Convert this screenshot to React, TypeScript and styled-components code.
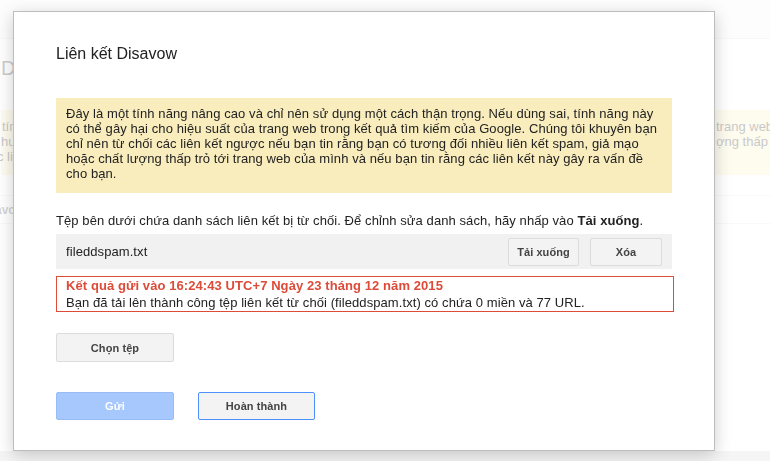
import React from "react";
import styled, { createGlobalStyle } from "styled-components";

const Global = createGlobalStyle`
  html, body { margin: 0; padding: 0; }
  body {
    font-family: "Liberation Sans", Arial, sans-serif;
    background: #ffffff;
    overflow: hidden;
  }
  * { box-sizing: border-box; }
`;

/* ---------- background page (behind the modal) ---------- */
const BgPage = styled.div`
  width: 770px;
  height: 461px;
  display: flex;
  flex-direction: column;
  overflow: hidden;
  background: #ffffff;
`;

const BgTopBar = styled.div`
  height: 39px;
  flex: none;
  background: #f6f6f6;
  border-bottom: 1px solid #e0e0e0;
`;

const BgContent = styled.div`
  flex: 1;
  display: flex;
  flex-direction: column;
  padding-left: 1px;
`;

const BgHeading = styled.div`
  margin-top: 17px;
  font-size: 20px;
  line-height: 24px;
  color: #333;
  white-space: nowrap;
`;

const BgNotice = styled.div`
  margin-top: 30px;
  height: 65px;
  padding-top: 9px;
  background: #f9edbe;
  color: #222;
  font-size: 13px;
  line-height: 15px;
`;

const BgNoticeLine = styled.div`
  display: grid;
  grid-template-columns: 715px 1fr;
  white-space: nowrap;
  height: 15px;
`;

const BgLeftText = styled.span<{ $shift: number }>`
  margin-left: ${(p) => p.$shift}px;
`;

const BgTable = styled.div`
  margin-top: 20px;
  border-top: 1px solid #e5e5e5;
  border-bottom: 1px solid #e5e5e5;
  height: 29px;
  display: flex;
  align-items: center;
  font-size: 12px;
  font-weight: bold;
  color: #555;
  white-space: nowrap;
`;

const BgTableText = styled.span`
  margin-left: -6px;
`;

const BgFooter = styled.div`
  margin-top: auto;
  height: 10px;
  flex: none;
  background: #d6d6d6;
`;

const Overlay = styled.div`
  position: fixed;
  inset: 0;
  background: rgba(255, 255, 255, 0.75);
`;

/* ---------- modal dialog ---------- */
const Dialog = styled.div`
  position: fixed;
  left: 13px;
  top: 11px;
  width: 702px;
  background: #ffffff;
  border: 1px solid #bdbdbd;
  box-shadow: 0 4px 16px rgba(0, 0, 0, 0.2);
  padding: 32px 42px 30px 42px;
  display: flex;
  flex-direction: column;
  color: #222;
  font-size: 13px;
  letter-spacing: 0.08px;
`;

const Title = styled.div`
  font-size: 16px;
  line-height: 20px;
  color: #222;
  letter-spacing: 0;
`;

const Warning = styled.div`
  margin-top: 34px;
  background: #f9edbe;
  padding: 8px 10px 12px 10px;
  font-size: 13px;
  line-height: 15px;
  color: #222;
  white-space: nowrap;
`;

const Description = styled.div`
  margin-top: 20px;
  font-size: 13px;
  line-height: 16px;
  white-space: nowrap;
`;

const Strong = styled.b`
  font-weight: bold;
`;

const FileRow = styled.div`
  margin-top: 5px;
  height: 35px;
  background: #f1f1f1;
  display: flex;
  align-items: center;
  padding: 0 10px;
  gap: 11px;
`;

const FileName = styled.div`
  flex: 1;
  font-size: 13px;
  color: #222;
`;

const Button = styled.button<{ $w: number; $h?: number; $variant?: "default" | "primary" | "focus" }>`
  width: ${(p) => p.$w}px;
  height: ${(p) => p.$h ?? 28}px;
  padding: 0 8px;
  border-radius: 2px;
  font-family: "Liberation Sans", Arial, sans-serif;
  font-size: 11px;
  font-weight: bold;
  letter-spacing: 0.08px;
  cursor: default;
  outline: none;
  ${(p) =>
    p.$variant === "primary"
      ? `
    background: #a6c8fc;
    border: 1px solid #98bdf6;
    color: #ffffff;
  `
      : p.$variant === "focus"
      ? `
    background: #f3f3f3;
    border: 1px solid #4d90fe;
    color: #444;
  `
      : `
    background: #f3f3f3;
    border: 1px solid #dcdcdc;
    color: #444;
  `}
`;

const Result = styled.div`
  margin-top: 7px;
  width: calc(100% + 2px);
  border: 1px solid #dd4b39;
  padding: 0 9px;
  font-size: 13px;
  line-height: 17px;
  white-space: nowrap;
`;

const ResultTitle = styled.div`
  color: #dd4b39;
  font-weight: bold;
`;

const ResultText = styled.div`
  color: #222;
`;

const ChooseRow = styled.div`
  margin-top: 21px;
  display: flex;
`;

const Actions = styled.div`
  margin-top: 30px;
  display: flex;
  gap: 24px;
`;

const warningLines = [
  "Đây là một tính năng nâng cao và chỉ nên sử dụng một cách thận trọng. Nếu dùng sai, tính năng này",
  "có thể gây hại cho hiệu suất của trang web trong kết quả tìm kiếm của Google. Chúng tôi khuyên bạn",
  "chỉ nên từ chối các liên kết ngược nếu bạn tin rằng bạn có tương đối nhiều liên kết spam, giả mạo",
  "hoặc chất lượng thấp trỏ tới trang web của mình và nếu bạn tin rằng các liên kết này gây ra vấn đề",
  "cho bạn.",
];

export default function App() {
  return (
    <>
      <Global />
      <BgPage>
        <BgTopBar />
        <BgContent>
          <BgHeading>Disavow</BgHeading>
          <BgNotice>
            <BgNoticeLine>
              <BgLeftText $shift={1}>tính năng nâng cao</BgLeftText>
              <span>trang web của Google</span>
            </BgNoticeLine>
            <BgNoticeLine>
              <BgLeftText $shift={0}>huống nhiều</BgLeftText>
              <span>ợng thấp trỏ tới</span>
            </BgNoticeLine>
            <BgNoticeLine>
              <BgLeftText $shift={-4}>c liên kết</BgLeftText>
              <span></span>
            </BgNoticeLine>
          </BgNotice>
          <BgTable>
            <BgTableText>avow</BgTableText>
          </BgTable>
        </BgContent>
        <BgFooter />
      </BgPage>
      <Overlay />
      <Dialog role="dialog">
        <Title>Liên kết Disavow</Title>
        <Warning>
          {warningLines.map((line, i) => (
            <div key={i}>{line}</div>
          ))}
        </Warning>
        <Description>
          Tệp bên dưới chứa danh sách liên kết bị từ chối. Để chỉnh sửa danh sách, hãy nhấp vào{" "}
          <Strong>Tải xuống</Strong>.
        </Description>
        <FileRow>
          <FileName>fileddspam.txt</FileName>
          <Button $w={71}>Tải xuống</Button>
          <Button $w={72}>Xóa</Button>
        </FileRow>
        <Result>
          <ResultTitle>Kết quả gửi vào 16:24:43 UTC+7 Ngày 23 tháng 12 năm 2015</ResultTitle>
          <ResultText>
            Bạn đã tải lên thành công tệp liên kết từ chối (fileddspam.txt) có chứa 0 miền và 77 URL.
          </ResultText>
        </Result>
        <ChooseRow>
          <Button $w={118} $h={29}>Chọn tệp</Button>
        </ChooseRow>
        <Actions>
          <Button $w={118} $variant="primary">Gửi</Button>
          <Button $w={117} $variant="focus">Hoàn thành</Button>
        </Actions>
      </Dialog>
    </>
  );
}
